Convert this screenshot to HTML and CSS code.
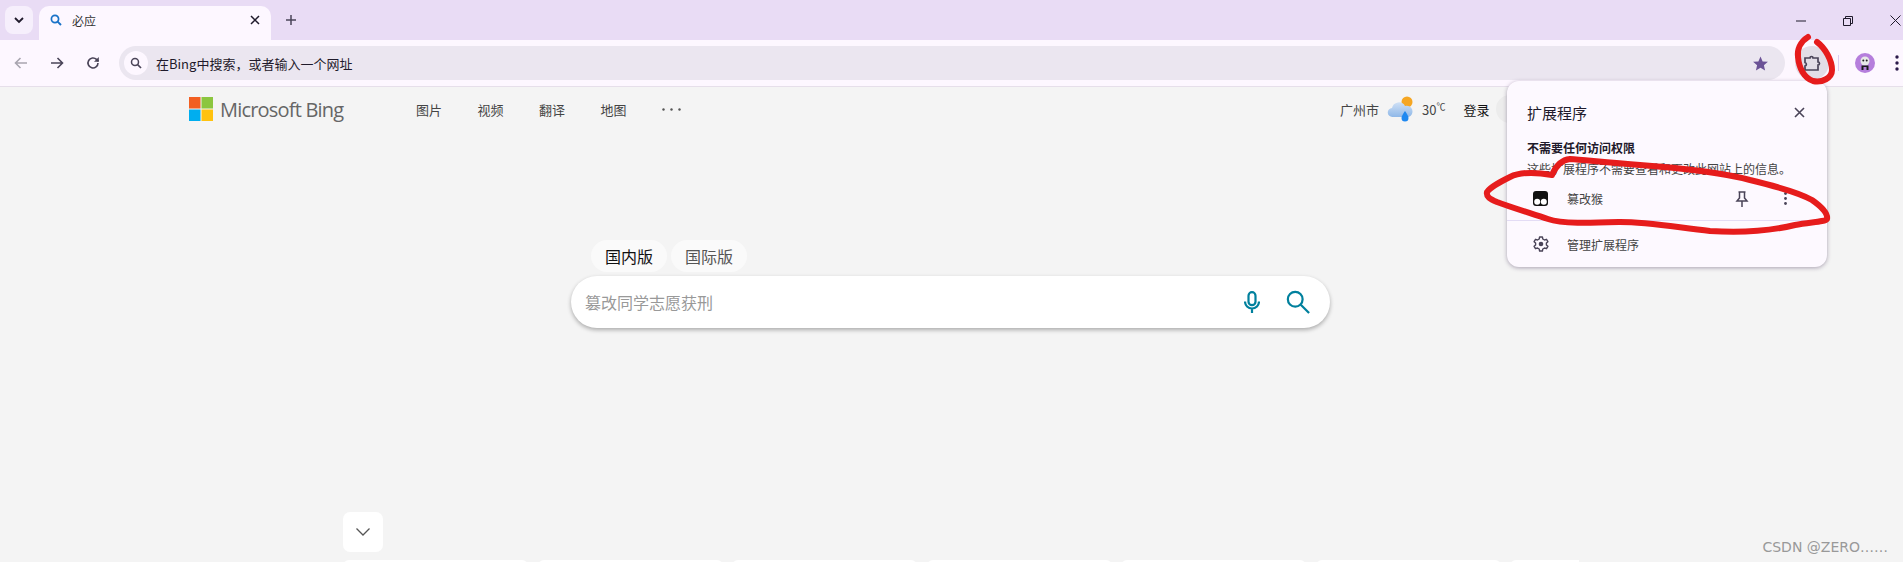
FILE: index.html
```html
<!DOCTYPE html>
<html lang="zh-CN">
<head>
  <meta charset="UTF-8" />
  <meta name="viewport" content="width=device-width, initial-scale=1.0"/>
  <title>必应</title>
  <link rel="stylesheet" href="styles.css">
</head>
<body>
  <div class="tabstrip">
    <div class="tabsearch">
      <svg width="12" height="12" viewBox="0 0 12 12"><path d="M2 4l4 4 4-4" fill="none" stroke="#1f1a2b" stroke-width="1.8"/></svg>
    </div>
    <div class="tab">
      <svg class="favicon" width="12" height="12" viewBox="0 0 12 12"><circle cx="5" cy="5" r="3.6" fill="none" stroke="#1a73c8" stroke-width="1.7"/><path d="M7.6 7.6L11 11" stroke="#1a73c8" stroke-width="1.9"/></svg>
      <span class="tabtitle">必应</span>
      <svg class="tabclose" width="10" height="10" viewBox="0 0 10 10"><path d="M1 1l8 8M9 1l-8 8" stroke="#1f1a2b" stroke-width="1.5"/></svg>
    </div>
    <svg class="newtab" width="12" height="12" viewBox="0 0 12 12"><path d="M6 1v10M1 6h10" stroke="#4a4458" stroke-width="1.5"/></svg>
    <div class="winbtns">
      <svg width="10" height="10" viewBox="0 0 10 10"><path d="M0 5h10" stroke="#1f1a2b"/></svg>
      <svg width="10" height="10" viewBox="0 0 10 10"><path d="M.5 2.5h7v7h-7zM2.500 2.500V.5h7v7h-2" fill="none" stroke="#1f1a2b"/></svg>
      <svg width="11" height="11" viewBox="0 0 11 11"><path d="M.5.5l10 10M10.500.5l-10 10" stroke="#1f1a2b"/></svg>
    </div>
  </div>

  <div class="toolbar">
    <svg class="navicon" width="16" height="16" viewBox="0 0 16 16"><path d="M14 8H2.5M7.5 3L2.5 8l5 5" fill="none" stroke="#a9a5b0" stroke-width="1.6"/></svg>
    <svg class="navicon" width="16" height="16" viewBox="0 0 16 16"><path d="M2 8h11.5M8.5 3l5 5-5 5" fill="none" stroke="#4a4458" stroke-width="1.6"/></svg>
    <svg class="navicon" width="16" height="16" viewBox="0 0 16 16"><path d="M13 8a5 5 0 1 1-1.5-3.600L13.500 6.300" fill="none" stroke="#4a4458" stroke-width="1.6"/><path d="M13.800 2v4.800H9z" fill="#4a4458"/></svg>
    <div class="omnibox">
      <div class="omniicon">
        <svg width="12" height="12" viewBox="0 0 12 12"><circle cx="5" cy="5" r="3.5" fill="none" stroke="#4a4458" stroke-width="1.5"/><path d="M7.5 7.5L11 11" stroke="#4a4458" stroke-width="1.7"/></svg>
      </div>
      <span class="omnitext">在Bing中搜索，或者输入一个网址</span>
      <svg class="star" width="17" height="17" viewBox="0 0 24 24"><path d="M12 2l3 7 7.5.7-5.700 4.900 1.700 7.400-6.500-3.900-6.500 3.900 1.700-7.400L1.500 9.700 9 9z" fill="#6b5296"/></svg>
    </div>
    <div class="extbtn">
      <svg width="20" height="20" viewBox="0 0 20 20"><path d="M3 5h5a1.500 1.500 0 0 1 3 0h5v4a1.500 1.500 0 0 1 0 3v5H3v-4a1.800 1.800 0 0 0 0-3.500z" fill="none" stroke="#4a4458" stroke-width="1.7"/></svg>
    </div>
    <div class="tooldivider"></div>
    <div class="avatar">
      <svg width="20" height="20" viewBox="0 0 20 20"><circle cx="10" cy="10" r="10" fill="#b57edc"/><circle cx="10" cy="8" r="4.500" fill="#e8e8e8"/><circle cx="8.300" cy="7.500" r="1" fill="#222"/><circle cx="11.700" cy="7.500" r="1" fill="#222"/><path d="M6.500 17v-4.500h7V17h-2v-3h-3v3z" fill="#1c1c1c"/></svg>
    </div>
    <svg class="moreicon" width="4" height="16" viewBox="0 0 4 16"><circle cx="2" cy="2" r="1.7" fill="#2b1a4a"/><circle cx="2" cy="8" r="1.7" fill="#2b1a4a"/><circle cx="2" cy="14" r="1.7" fill="#2b1a4a"/></svg>
  </div>

  <div class="page">
    <div class="header">
      <svg class="mslogo" width="24" height="24" viewBox="0 0 24 24">
        <rect width="11.500" height="11.500" fill="#f25f22"/>
        <rect x="12.500" width="11.500" height="11.500" fill="#8cc63f"/>
        <rect y="12.500" width="11.500" height="11.500" fill="#00aeef"/>
        <rect x="12.500" y="12.500" width="11.500" height="11.500" fill="#ffc20e"/>
      </svg>
      <span class="brand">Microsoft Bing</span>
      <nav class="nav">
        <a>图片</a>
        <a>视频</a>
        <a>翻译</a>
        <a>地图</a>
        <svg width="19" height="3" viewBox="0 0 19 3"><circle cx="1.5" cy="1.5" r="1.2" fill="#555"/><circle cx="9.5" cy="1.5" r="1.2" fill="#555"/><circle cx="17.5" cy="1.5" r="1.2" fill="#555"/></svg>
      </nav>
      <div class="headright">
        <span class="city">广州市</span>
        <svg width="27" height="26" viewBox="0 0 27 26">
          <defs>
            <linearGradient id="cloud" x1="0" y1="0" x2="0" y2="1"><stop offset="0" stop-color="#cfe0f5"/><stop offset="1" stop-color="#8fb8e8"/></linearGradient>
          </defs>
          <circle cx="20" cy="6" r="5.500" fill="#f5a623"/>
          <path d="M5.500 21a4.500 4.500 0 0 1-.5-9 7 7 0 0 1 13-2 5.500 5.500 0 0 1 3.500 11z" fill="url(#cloud)"/>
          <path d="M18 15c2 3 3.500 5 3.500 7a3.500 3.500 0 0 1-7 0c0-2 1.500-4 3.500-7z" fill="#1e88f0"/>
        </svg>
        <span class="temp">30<sup>℃</sup></span>
        <a class="login">登录</a>
        <div class="rewards"></div>
      </div>
    </div>

    <div class="searcharea">
      <div class="scopes">
        <span class="scope active">国内版</span>
        <span class="scope">国际版</span>
      </div>
      <div class="searchbox">
        <span class="placeholder">篡改同学志愿获刑</span>
        <svg width="16" height="22" viewBox="0 0 16 22"><rect x="4.500" y="1.200" width="7" height="13" rx="3.500" fill="none" stroke="#00809d" stroke-width="2.200"/><path d="M1 10.500a7 7 0 0 0 14 0M8 17.500V22" fill="none" stroke="#00809d" stroke-width="2.200"/></svg>
        <svg width="24" height="24" viewBox="0 0 26 26"><circle cx="10" cy="10" r="8" fill="none" stroke="#00809d" stroke-width="2.400"/><path d="M16 16l9 9" stroke="#00809d" stroke-width="2.400"/></svg>
      </div>
    </div>

    <div class="morebtn">
      <svg width="14" height="8" viewBox="0 0 14 8"><path d="M.5.5L7 7 13.500.5" fill="none" stroke="#555" stroke-width="1.3"/></svg>
    </div>
    <div class="cards">
      <div class="card"></div>
      <div class="card"></div>
      <div class="card"></div>
      <div class="card"></div>
      <div class="card"></div>
      <div class="card"></div>
      <div class="card"></div>
    </div>
    <div class="watermark">CSDN @ZERO……</div>

    <div class="popup">
      <div class="popuphead">
        <span class="popuptitle">扩展程序</span>
        <svg width="11" height="11" viewBox="0 0 11 11"><path d="M1 1l9 9M10 1l-9 9" stroke="#4a4458" stroke-width="1.6"/></svg>
      </div>
      <div class="access">
        <div class="accesstitle">不需要任何访问权限</div>
        <div class="accesssub">这些扩展程序不需要查看和更改此网站上的信息。</div>
      </div>
      <div class="extrow">
        <svg class="rowicon" width="15" height="15" viewBox="0 0 15 15"><rect width="15" height="15" rx="3" fill="#111"/><circle cx="4.200" cy="10.800" r="3" fill="#fff"/><circle cx="10.800" cy="10.800" r="3" fill="#fff"/></svg>
        <span class="rowtext">篡改猴</span>
        <svg class="pin" width="14" height="16" viewBox="0 0 14 16"><path d="M3.500 1h7M4.500 1v6L2 10h10L9.500 7V1M7 10v6" fill="none" stroke="#4a4458" stroke-width="1.5"/></svg>
        <svg class="rowmore" width="3" height="13" viewBox="0 0 3 13"><circle cx="1.5" cy="1.5" r="1.4" fill="#4a4458"/><circle cx="1.5" cy="6.5" r="1.4" fill="#4a4458"/><circle cx="1.5" cy="11.500" r="1.4" fill="#4a4458"/></svg>
      </div>
      <div class="popupfoot">
        <svg class="rowicon gear" width="16" height="16" viewBox="0 0 16 16"><path d="M6.600 1h2.800l.4 2 1.700 1 2-.7 1.400 2.400-1.500 1.400v1.800l1.500 1.400-1.400 2.400-2-.7-1.700 1-.4 2H6.600l-.4-2-1.700-1-2 .7L1.100 10.300l1.500-1.400V7.100L1.100 5.700l1.400-2.400 2 .7 1.700-1z" fill="none" stroke="#4a4458" stroke-width="1.4" stroke-linejoin="round"/><circle cx="8" cy="8" r="2.300" fill="#4a4458"/></svg>
        <span class="rowtext">管理扩展程序</span>
      </div>
    </div>
  </div>

  <svg class="ink" width="1903" height="562" viewBox="0 0 1903 562">
    <path d="M1808 37C1800 42 1797 50 1798 57C1799 68 1804 78 1813 81C1822 83 1832 78 1832 70C1832 60 1825 48 1817 42"/>
    <path d="M1552 175C1535 172 1520 172 1510 177C1500 182 1490 187 1487 192C1486 197 1490 199 1497 202C1510 207 1530 213 1548 219C1562 224 1590 223 1620 222C1650 222 1680 228 1710 231C1740 233 1770 231 1795 225C1810 222 1825 222 1827 219C1828 214 1822 207 1812 200C1800 193 1775 186 1750 180C1720 172 1680 168 1640 165C1610 163 1585 160 1570 159C1560 160 1555 168 1552 175"/>
  </svg>
</body>
</html>
```
FILE: styles.css
```css
* { box-sizing: border-box; }
html, body { margin: 0; height: 100%; overflow: hidden; }
body { width: 1903px; height: 562px; font-family: "Noto Sans CJK SC", "Noto Sans", sans-serif; color: #1f1a2b; background: #f4f4f4; position: relative; }
svg { display: block; flex: none; }

.tabstrip { height: 40px; background: #e9dcf5; display: flex; align-items: flex-start; padding: 6px 0 0 5px; }
.tabsearch { width: 28px; height: 28px; border-radius: 8px; background: #f6effc; display: flex; align-items: center; justify-content: center; }
.tab { width: 232px; height: 34px; margin-left: 6px; background: #fdf7ff; border-radius: 10px 10px 0 0; display: flex; align-items: center; padding: 0 11px 6px 11px; }
.favicon { margin-right: 10px; }
.tabtitle { font-size: 12px; flex: 1; color: #333; }
.newtab { margin: 8px 0 0 14px; }
.winbtns { margin-left: auto; display: flex; align-items: center; gap: 37px; padding: 9px 2px 0 0; }

.toolbar { height: 47px; background: #fdf7ff; border-bottom: 1px solid #e6dfea; display: flex; align-items: center; padding-left: 13px; }
.navicon { margin-right: 20px; }
.omnibox { width: 1666px; height: 34px; margin-left: -2px; background: #ebe6f0; border-radius: 17px; display: flex; align-items: center; padding: 0 16px 0 5px; }
.omniicon { width: 24px; height: 24px; border-radius: 50%; background: #fdf7ff; display: flex; align-items: center; justify-content: center; margin-right: 8px; }
.omnitext { font-size: 13px; flex: 1; color: #1f1a2b; }
.extbtn { width: 34px; height: 34px; margin-left: 10px; border-radius: 50%; background: #e2dde6; display: flex; align-items: center; justify-content: center; }
.tooldivider { width: 1px; height: 16px; margin-left: 9px; background: #dccdf0; }
.avatar { margin-left: 16px; }
.moreicon { margin-left: 20px; }

.page { height: 475px; position: relative; }
.header { height: 44px; padding: 0 0 0 189px; display: flex; align-items: center; }
.brand { width: 124px; margin-left: 7px; font-family: "Open Sans", sans-serif; font-size: 20px; font-weight: 500; color: #666; letter-spacing: -.8px; white-space: nowrap; }
.nav { margin-left: 72px; display: flex; align-items: center; gap: 35.5px; font-size: 13px; color: #444; }
.headright { margin-left: 659px; display: flex; align-items: center; font-size: 13px; color: #444; }
.city { margin-right: 8px; }
.temp { margin-left: 8px; font-size: 13px; }
.temp sup { font-size: 9px; line-height: 0; }
.login { margin-left: 18px; color: #111; }
.rewards { width: 30px; height: 28px; margin-left: 6px; border-radius: 14px; background: #ececec; }

.searcharea { width: 759px; margin: 109px 0 0 571px; }
.scopes { display: flex; gap: 4px; padding-left: 20px; }
.scope { width: 76px; height: 32px; border-radius: 16px; background: #fafafa; font-size: 16px; color: #555; display: flex; align-items: center; justify-content: center; }
.scope.active { color: #111; }
.searchbox { height: 52px; margin-top: 4px; background: #fff; border-radius: 26px; box-shadow: 0 2px 4px rgba(0,0,0,.3); display: flex; align-items: center; padding: 0 20px 0 14px; }
.placeholder { flex: 1; font-size: 16px; color: #999; }
.searchbox svg:last-child { margin-left: 26px; }

.morebtn { width: 40px; height: 40px; margin: 184px 0 0 343px; background: #fff; border-radius: 7px; display: flex; align-items: center; justify-content: center; }
.cards { width: 1236px; margin: 8px 0 0 343px; display: flex; gap: 9.5px; overflow: hidden; }
.card { width: 185px; height: 10px; flex: none; background: #fff; border-radius: 6px 6px 0 0; }
.watermark { position: absolute; right: 15px; bottom: 7px; font-family: "DejaVu Sans", sans-serif; font-size: 14px; color: #999; }

.popup { position: absolute; left: 1507px; top: -6px; width: 320px; height: 186px; background: #fdf9ff; border-radius: 12px; box-shadow: 0 1px 4px rgba(60,40,80,.4); }
.popuphead { height: 56px; padding: 6px 22px 0 20px; display: flex; align-items: center; justify-content: space-between; }
.popuptitle { font-size: 15px; color: #1f1a2b; }
.access { padding-left: 20px; font-size: 12px; line-height: 21px; }
.accesstitle { font-weight: 700; }
.accesssub { color: #444; }
.extrow { height: 42px; padding: 0 0 2px 26px; border-bottom: 1px solid #e3dcf5; display: flex; align-items: center; }
.popupfoot { height: 46px; display: flex; align-items: center; padding-left: 26px; }
.rowicon { margin-right: 19px; }
.rowicon.gear { margin-right: 18px; }
.rowtext { font-size: 12px; color: #444; flex: 1; }
.pin { margin-right: 35px; }
.rowmore { margin-right: 40px; }

/* hand drawn red marks on top of the screenshot */
.ink { position: absolute; left: 0; top: 0; pointer-events: none; }
.ink path { fill: none; stroke: #e61c1c; stroke-width: 6; stroke-linecap: round; stroke-linejoin: round; }
```
